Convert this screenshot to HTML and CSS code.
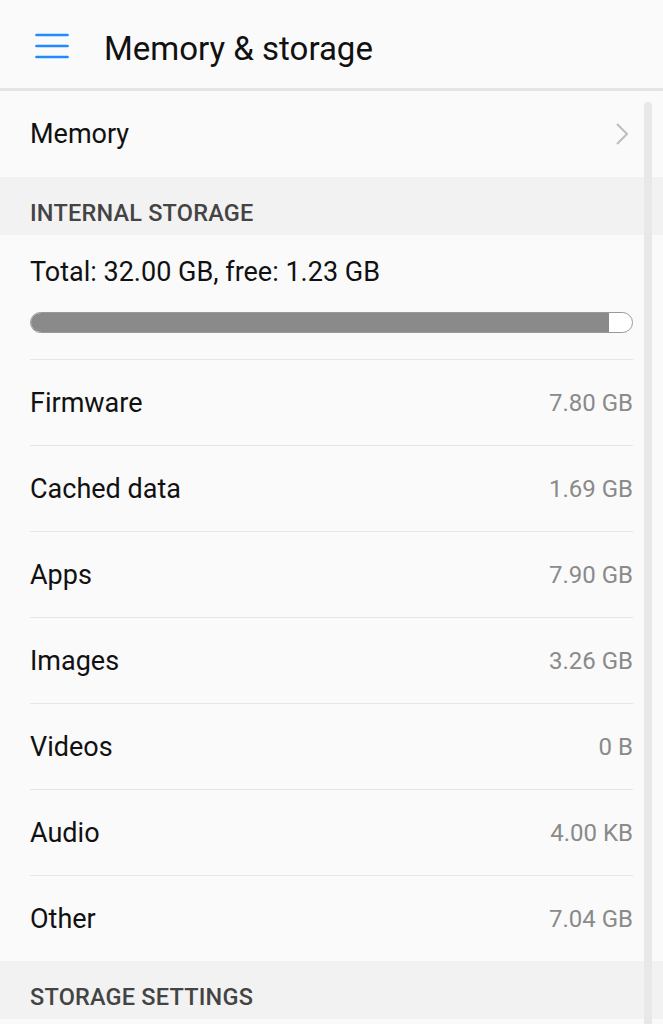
FILE: index.html
```html
<!DOCTYPE html>
<html>
<head>
<meta charset="utf-8">
<link rel="stylesheet" href="styles.css">
</head>
<body>
<header class="appbar">
  <svg class="menu" width="34" height="26" viewBox="0 0 34 26"><g stroke="#1f8bff" stroke-width="2.6" stroke-linecap="round"><line x1="1.5" y1="2" x2="32.5" y2="2"/><line x1="1.5" y1="13" x2="32.5" y2="13"/><line x1="1.5" y1="24" x2="32.5" y2="24"/></g></svg>
  <h1 class="title">Memory &amp; storage</h1>
</header>
<main class="content">
  <div class="nav-row">
    <span class="label">Memory</span>
    <svg class="chev" width="14" height="24" viewBox="0 0 14 24"><polyline points="2,2 12,12 2,22" fill="none" stroke="#bdbdbd" stroke-width="2"/></svg>
  </div>
  <div class="section">INTERNAL STORAGE</div>
  <div class="summary">
    <div class="total">Total: 32.00 GB, free: 1.23 GB</div>
    <div class="bar"><div class="fill" style="width:96.2%"></div></div>
  </div>
  <ul class="list">
    <li class="row"><span class="label">Firmware</span><span class="value">7.80 GB</span></li>
    <li class="row"><span class="label">Cached data</span><span class="value">1.69 GB</span></li>
    <li class="row"><span class="label">Apps</span><span class="value">7.90 GB</span></li>
    <li class="row"><span class="label">Images</span><span class="value">3.26 GB</span></li>
    <li class="row"><span class="label">Videos</span><span class="value">0 B</span></li>
    <li class="row"><span class="label">Audio</span><span class="value">4.00 KB</span></li>
    <li class="row"><span class="label">Other</span><span class="value">7.04 GB</span></li>
  </ul>
  <div class="section">STORAGE SETTINGS</div>
  <div class="scrollbar"></div>
</main>
</body>
</html>
```

FILE: styles.css
```css
html, body {
  margin: 0;
  padding: 0;
  background: #fafafa;
  font-family: Roboto, "Liberation Sans", sans-serif;
  color: #111;
}
body {
  height: 1024px;
  overflow: hidden;
}
.appbar {
  height: 88px;
  display: flex;
  align-items: center;
  padding-left: 35px;
  border-bottom: 3px solid #e4e4e4;
  box-sizing: content-box;
}
.menu {
  display: block;
  margin-top: 4px;
}
.title {
  margin: 8px 0 0 35px;
  font-size: 33px;
  font-weight: 400;
  color: #111;
}
.content {
  position: relative;
}
.nav-row {
  height: 86px;
  display: flex;
  align-items: center;
  justify-content: space-between;
  padding: 0 34px 0 30px;
}
.label {
  font-size: 27px;
  color: #111;
}
.section {
  height: 58px;
  background: #f2f2f2;
  display: flex;
  align-items: center;
  padding: 0 30px;
  font-size: 23.5px;
  font-weight: 500;
  letter-spacing: 0.2px;
  color: #444;
  padding-top: 13px;
  box-sizing: border-box;
}
.summary {
  padding: 0 30px;
}
.total {
  font-size: 27px;
  padding-top: 21px;
  height: 77px;
  box-sizing: border-box;
}
.bar {
  height: 21px;
  border: 1.5px solid #999;
  border-radius: 11px;
  background: #fff;
  overflow: hidden;
  box-sizing: border-box;
  margin-bottom: 26px;
}
.fill {
  height: 100%;
  background: #8a8a8a;
}
.list {
  list-style: none;
  margin: 0;
  padding: 0 30px;
}
.row {
  height: 86px;
  display: flex;
  align-items: center;
  justify-content: space-between;
  border-top: 1px solid #e6e6e6;
  box-sizing: border-box;
}
.value {
  font-size: 24px;
  color: #8a8a8a;
}
.scrollbar {
  position: absolute;
  top: 11px;
  right: 11px;
  width: 8px;
  height: 930px;
  background: #e8e8e8;
  border-radius: 4px;
}
```
